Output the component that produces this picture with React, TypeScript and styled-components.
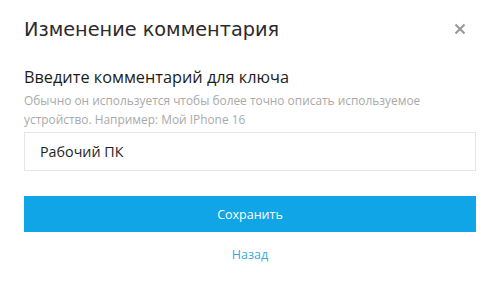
import React from "react";
import styled, { createGlobalStyle } from "styled-components";

const GlobalStyle = createGlobalStyle`
  html, body {
    margin: 0;
    padding: 0;
    background: #ffffff;
  }
  * {
    box-sizing: border-box;
  }
`;

const accent = "#0fa5e6";

export default function App() {
  return (
    <>
      <GlobalStyle />
      <Modal>
        <Header>
          <Title>Изменение комментария</Title>
          <CloseButton aria-label="close">
            <svg width="12" height="12" viewBox="0 0 12 12">
              <path d="M1.5 1.5L10.5 10.5M10.5 1.5L1.5 10.5" stroke="#9a9a9a" strokeWidth="2.2" />
            </svg>
          </CloseButton>
        </Header>
        <Label>Введите комментарий для ключа</Label>
        <Hint>
          Обычно он используется чтобы более точно описать используемое
          устройство. Например: Мой IPhone 16
        </Hint>
        <Input defaultValue="Рабочий ПК" />
        <SaveButton>Сохранить</SaveButton>
        <BackLink href="#">Назад</BackLink>
      </Modal>
    </>
  );
}

const Modal = styled.div`
  width: 500px;
  height: 286px;
  padding: 16px 24px 0;
  display: flex;
  flex-direction: column;
  font-family: "Open Sans", "Liberation Sans", sans-serif;
`;

const Header = styled.div`
  display: flex;
  align-items: center;
  justify-content: space-between;
  height: 26px;
`;

const Title = styled.h1`
  margin: 0;
  font-family: "DejaVu Sans", sans-serif;
  font-weight: normal;
  font-size: 19.3px;
  color: #2b2b2b;
`;

const CloseButton = styled.button`
  border: 0;
  background: none;
  padding: 0;
  margin-right: 10px;
  display: flex;
  cursor: pointer;
`;

const Label = styled.div`
  margin-top: 24px;
  font-size: 16.3px;
  color: #1c1c1c;
  line-height: 22px;
`;

const Hint = styled.div`
  margin-top: 3px;
  font-size: 11.9px;
  line-height: 19px;
  color: #a9a9a9;
`;

const Input = styled.input`
  margin-top: 3px;
  height: 39px;
  width: 100%;
  border: 1px solid #e6e6e6;
  padding: 0 15px;
  font-family: inherit;
  font-size: 14.3px;
  color: #1e1e1e;
  outline: none;
`;

const SaveButton = styled.button`
  margin-top: 25px;
  height: 36px;
  width: 100%;
  border: 0;
  background: ${accent};
  color: #ffffff;
  font-family: inherit;
  font-size: 12.5px;
  cursor: pointer;
`;

const BackLink = styled.a`
  margin-top: 14px;
  align-self: center;
  font-size: 12.5px;
  color: #3aa7dc;
  text-decoration: none;
`;
